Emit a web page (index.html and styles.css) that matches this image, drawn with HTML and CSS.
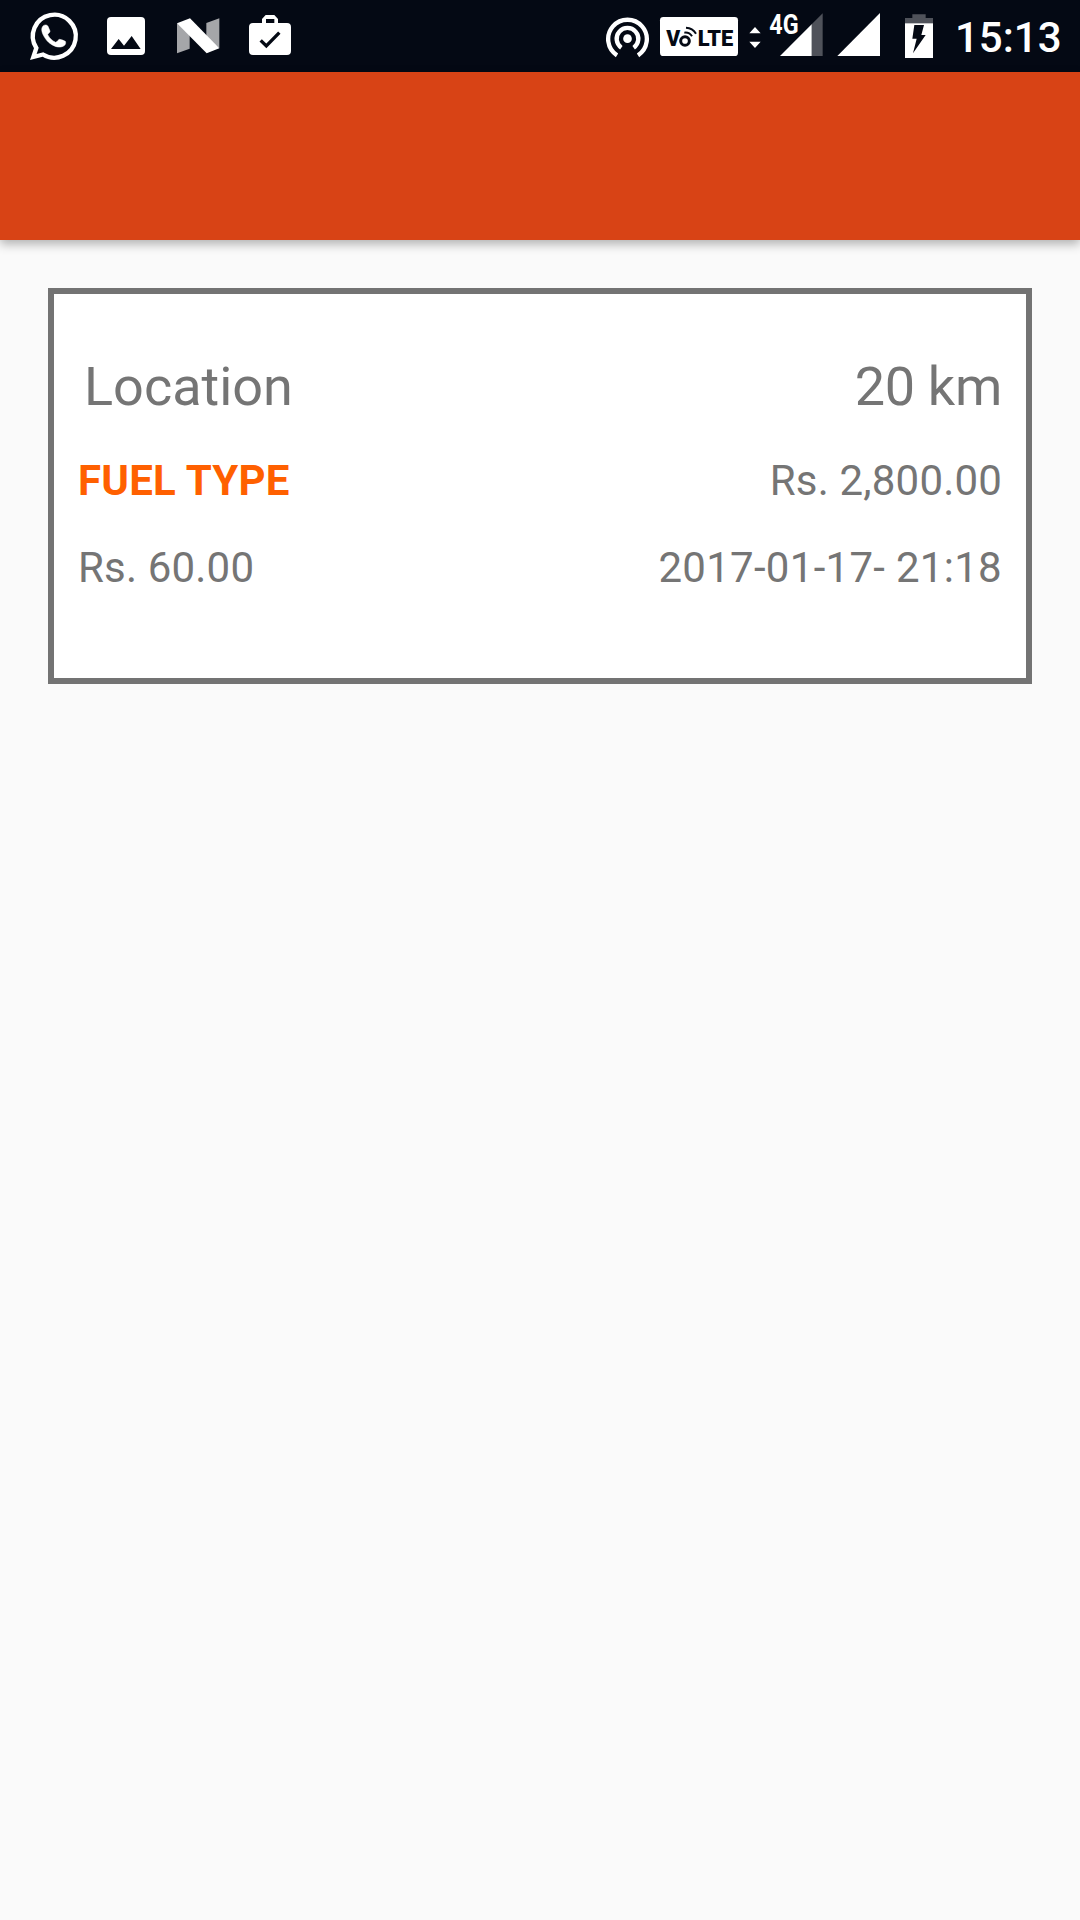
FILE: index.html
```html
<!DOCTYPE html>
<html lang="en">
<head>
<meta charset="utf-8">
<title>Fuel log</title>
<link rel="stylesheet" href="styles.css">
</head>
<body>
<header class="status-bar">
  <div class="status-group">
    <svg class="icon" width="90" height="72" viewBox="1 0 270 216">
      <path d="M101 171L110 144A64.500 64.500 0 1 1 130 163.500Z" fill="none" stroke="#fff" stroke-width="13"/>
      <path d="M131 77C137 73 143 75 145 79L151 93C152 97 146 100 144 104C150 115 157 122 168 127C172 126 176 118 180 118C186 119 192 121 197 124C200 131 196 138 187 140C172 145 153 134 142 122C132 110 122 92 128 81Z" fill="#fff" stroke="#fff" stroke-width="1.500"/>
    </svg>
    <svg class="icon" width="70" height="72" viewBox="270 0 210 216">
      <rect x="321" y="51" width="114" height="114" rx="12" fill="#fff"/>
      <path d="M333 147L356 117L372 137L395 108L422 147Z" fill="#040914"/>
    </svg>
    <svg class="icon" width="70" height="72" viewBox="480 0 210 216">
      <path d="M531 70L569 90V146L531 160ZM619 69L658 55V145L619 115Z" fill="#a5a6a9"/>
      <path d="M531 70L570 55L658 145L620 160Z" fill="#fff"/>
    </svg>
    <svg class="icon" width="70" height="72" viewBox="690 0 210 216">
      <path d="M759 69H786V57L797 45H823L834 57V69H861A12 12 0 0 1 873 81V153A12 12 0 0 1 861 165H759A12 12 0 0 1 747 153V81A12 12 0 0 1 759 69ZM798 69H823V57H798Z" fill="#fff" fill-rule="evenodd"/>
      <path d="M782 121L799 138L838 98" fill="none" stroke="#040914" stroke-width="10"/>
    </svg>
  </div>
  <div class="status-group">
    <svg class="icon" width="60" height="72" viewBox="0 0 180 216">
      <g fill="none" stroke="#fff" stroke-width="13">
        <path d="M81 166A58 58 0 1 1 144 166"/>
        <path d="M94 143A32.500 32.500 0 1 1 131 143"/>
      </g>
      <circle cx="112.500" cy="116" r="13" fill="#fff"/>
    </svg>
    <svg class="icon" width="95" height="72" viewBox="180 0 285 216">
      <rect x="210" y="51" width="234" height="117" rx="10" fill="#fff"/>
      <g class="volte" fill="#040914">
        <text x="229" y="137" font-size="65" textLength="42" lengthAdjust="spacingAndGlyphs">V</text>
        <text x="323" y="137" font-size="65" textLength="107" lengthAdjust="spacingAndGlyphs">LTE</text>
      </g>
      <g fill="none" stroke="#040914">
        <circle cx="285" cy="123" r="13" stroke-width="9"/>
        <path d="M283 98Q298 96 306 109M288 83Q308 84 318 101" stroke-width="6"/>
      </g>
    </svg>
    <svg class="icon" width="85" height="72" viewBox="465 0 255 216">
      <path d="M478 100L495 81L512 100ZM478 125L495 144L512 125Z" fill="#fff"/>
      <path d="M698 40V168H665V73Z" fill="#4f525a"/>
      <path d="M665 73V168H570Z" fill="#fff"/>
      <text class="network" x="538" y="102" font-size="82" textLength="88" lengthAdjust="spacingAndGlyphs" fill="#fff">4G</text>
    </svg>
    <svg class="icon" width="60" height="72" viewBox="30 0 180 216">
      <path d="M180 39V168H52Z" fill="#fff"/>
    </svg>
    <svg class="icon" width="60" height="72" viewBox="210 0 180 216">
      <path d="M255 72V54H277V43H317V54H339V72Z" fill="#4f525a"/>
      <path d="M255 70H339V174H255Z" fill="#fff"/>
      <path d="M283 75H312L304 105H317L279 160L290 116H277Z" fill="#040914"/>
    </svg>
    <span class="clock">15:13</span>
  </div>
</header>
<div class="app-bar"></div>
<main class="content">
  <section class="card">
    <div class="row row-large"><span class="location">Location</span><span class="distance">20 km</span></div>
    <div class="row"><span class="fuel">FUEL TYPE</span><span>Rs. 2,800.00</span></div>
    <div class="row"><span>Rs. 60.00</span><span class="date">2017-01-17- 21:18</span></div>
  </section>
</main>
</body>
</html>
```
FILE: styles.css
```css
* { box-sizing: border-box; }
body {
  margin: 0;
  min-height: 1920px;
  background: #fafafa;
  font-family: Roboto, "Liberation Sans", sans-serif;
  color: #757575;
}
.status-bar {
  display: flex;
  justify-content: space-between;
  height: 72px;
  background: #040914;
}
.status-group { display: flex; align-items: center; }
.icon { display: block; flex: none; }
.volte { font-family: Roboto, sans-serif; font-weight: 900; }
.network { font-family: Roboto, sans-serif; font-weight: 700; }
.clock {
  width: 130px;
  height: 72px;
  padding: 2px 0 0 5px;
  color: #fff;
  font-size: 42px;
  font-weight: 500;
  line-height: 72px;
}
.app-bar {
  height: 168px;
  background: #d84315;
  box-shadow: 0 4px 10px rgba(0, 0, 0, 0.3);
}
.content { padding: 48px; }
.card {
  display: flex;
  flex-direction: column;
  gap: 38px;
  height: 396px;
  padding: 61px 24px 0;
  border: 6px solid #737373;
  background: #fff;
}
.row {
  display: flex;
  justify-content: space-between;
  font-size: 42px;
  line-height: 49px;
  letter-spacing: 0.18px;
}
.row-large { font-size: 54px; line-height: 63px; letter-spacing: 0; }
.location { padding-left: 6px; }
.distance { letter-spacing: -0.3px; }
.fuel { color: #ff6000; font-weight: 700; letter-spacing: 0.25px; }
.date { letter-spacing: 0.29px; }
```
